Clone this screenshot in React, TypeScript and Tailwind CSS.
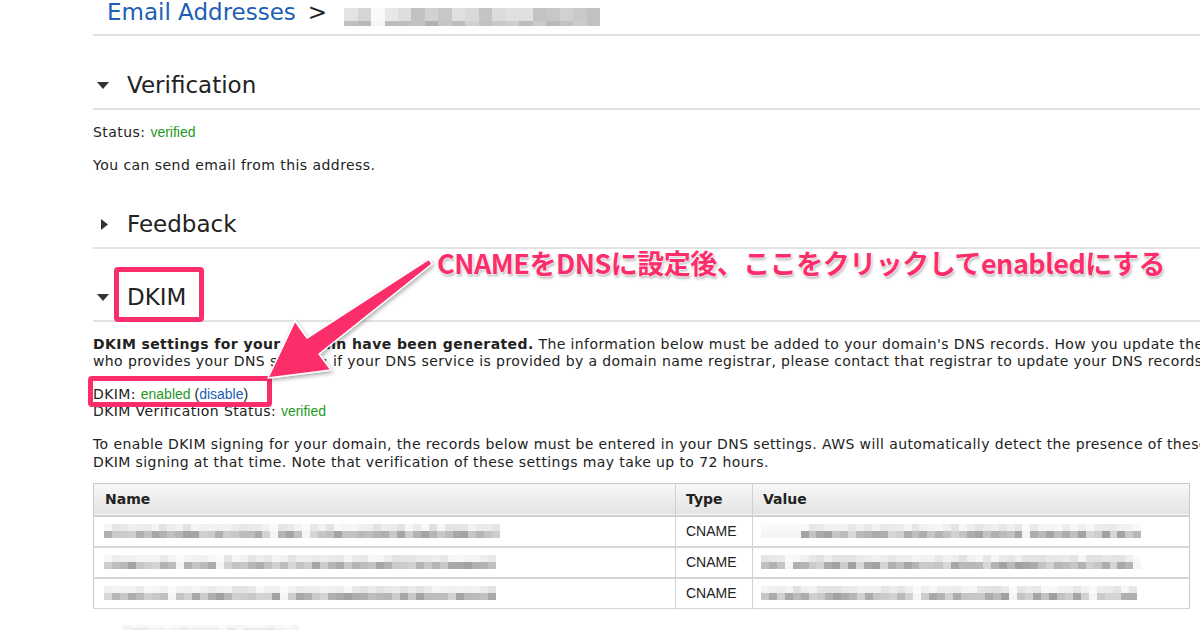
import React from "react";

const PINK = "#fb2d6a";

// deterministic pseudo random so the mosaic is stable
function rng(seed: number) {
  let s = seed;
  return () => {
    s = (s * 9301 + 49297) % 233280;
    return s / 233280;
  };
}

function gray(v: number) {
  const c = Math.round(v);
  return `rgb(${c},${c},${c + 2})`;
}

function Mosaic({
  width,
  seed,
  block = 8,
  topH = 7,
  botH = 7,
  top = [225, 248],
  bot = [160, 215],
}: {
  width: number;
  seed: number;
  block?: number;
  topH?: number;
  botH?: number;
  top?: number[];
  bot?: number[];
}) {
  const r = rng(seed);
  const n = Math.ceil(width / block);
  const cells = Array.from({ length: n }, () => {
    const gap = r() < 0.06;
    return {
      t: gap ? 250 : top[0] + r() * (top[1] - top[0]),
      b: gap ? 245 : bot[0] + r() * (bot[1] - bot[0]),
    };
  });
  return (
    <div className="flex flex-col" style={{ width }}>
      <div className="flex">
        {cells.map((c, i) => (
          <div key={i} style={{ width: block, height: topH, background: gray(c.t) }} />
        ))}
      </div>
      <div className="flex">
        {cells.map((c, i) => (
          <div key={i} style={{ width: block, height: botH, background: gray(c.b) }} />
        ))}
      </div>
    </div>
  );
}

function Caret({ open }: { open: boolean }) {
  return (
    <div className="w-[34px] flex items-center">
      {open ? (
        <svg width="12" height="7" viewBox="0 0 12 7" className="ml-[4px]">
          <path d="M0 0 L12 0 L6 7 Z" fill="#333" />
        </svg>
      ) : (
        <svg width="7" height="11" viewBox="0 0 7 11" className="ml-[8px]">
          <path d="M0 0 L7 5.5 L0 11 Z" fill="#333" />
        </svg>
      )}
    </div>
  );
}

function SectionHead({ title, open, className }: { title: string; open: boolean; className: string }) {
  return (
    <div className={`flex items-center h-[30px] pb-[8px] box-content border-b-2 border-[#e2e2e2] ${className}`}>
      <Caret open={open} />
      <span className="text-[23px] leading-[30px] text-[#222]">{title}</span>
    </div>
  );
}

const rows = [
  { seed: 11, vseed: 71, nameW: 396, valW: 380 },
  { seed: 23, vseed: 83, nameW: 392, valW: 380 },
  { seed: 37, vseed: 97, nameW: 392, valW: 376 },
];

export default function App() {
  return (
    <div className="relative w-[1200px] h-[630px] overflow-hidden bg-white text-[#222] font-['DejaVu_Sans',Verdana,sans-serif]">
      <div className="pl-[93px]">
        {/* Breadcrumb */}
        <div className="flex items-start h-[36px] border-b-2 border-[#e2e2e2]">
          <span className="text-[23px] leading-[24px] text-[#1d5fb6] ml-[14px]">Email Addresses</span>
          <span className="text-[23px] leading-[24px] text-[#222] ml-[12px]">&gt;</span>
          <div className="ml-[17px] mt-[8px]">
            <Mosaic width={256} seed={5} block={14} topH={13} botH={5} top={[190, 232]} bot={[170, 210]} />
          </div>
        </div>

        <SectionHead title="Verification" open className="mt-[34px]" />
        <div className="text-[14px] leading-[18px] tracking-[0.45px] mt-[13px]">
          Status: <span className="font-['Liberation_Sans',Arial,sans-serif] tracking-normal text-[#1f9a1f]">verified</span>
        </div>
        <div className="text-[14px] leading-[18px] tracking-[0.45px] mt-[15px]">You can send email from this address.</div>

        <SectionHead title="Feedback" open={false} className="mt-[35px]" />

        <SectionHead title="DKIM" open className="mt-[33px]" />
        <div className="text-[14px] leading-[17px] tracking-[0.4px] mt-[14px] whitespace-nowrap">
          <div>
            <b>DKIM settings for your domain have been generated.</b> The information below must be added to your
            domain's DNS records. How you update the DNS records depends on
          </div>
          <div>
            who provides your DNS service; if your DNS service is provided by a domain name registrar, please contact
            that registrar to update your DNS records.
          </div>
        </div>

        <div className="text-[14px] leading-[17px] tracking-[0.4px] mt-[16px] whitespace-nowrap">
          <div>
            DKIM:{" "}
            <span className="font-['Liberation_Sans',Arial,sans-serif] tracking-normal">
              <span className="text-[#1f9a1f]">enabled</span> (<span className="text-[#1d5fb6]">disable</span>)
            </span>
          </div>
          <div>
            DKIM Verification Status:{" "}
            <span className="font-['Liberation_Sans',Arial,sans-serif] tracking-normal text-[#1f9a1f]">verified</span>
          </div>
        </div>

        <div className="text-[14px] leading-[18px] tracking-[0.4px] mt-[15px] whitespace-nowrap">
          <div>
            To enable DKIM signing for your domain, the records below must be entered in your DNS settings. AWS will
            automatically detect the presence of these records, and enable
          </div>
          <div>DKIM signing at that time. Note that verification of these settings may take up to 72 hours.</div>
        </div>

        {/* Records table */}
        <table className="mt-[12px] w-[1097px] border-collapse border border-[#c9c9c9] text-[14px]">
          <thead>
            <tr className="h-[32px] bg-gradient-to-b from-[#f8f8f8] to-[#e3e3e3] border-b-2 border-[#cfcfcf]">
              <th className="w-[582px] text-left font-bold pl-[11px] border-r border-[#d0d0d0]">Name</th>
              <th className="w-[77px] text-left font-bold pl-[10px] border-r border-[#d0d0d0]">Type</th>
              <th className="text-left font-bold pl-[10px]">Value</th>
            </tr>
          </thead>
          <tbody>
            {rows.map((r) => (
              <tr key={r.seed} className="h-[31px] border-b-2 border-[#d6d6d6] last:border-b">
                <td className="pl-[10px] border-r border-[#d0d0d0]">
                  <Mosaic width={r.nameW} seed={r.seed} />
                </td>
                <td className="pl-[10px] border-r border-[#d0d0d0] font-['Liberation_Sans',Arial,sans-serif] text-[14px] text-[#222]">
                  CNAME
                </td>
                <td className="pl-[8px]">
                  <Mosaic width={r.valW} seed={r.vseed} />
                </td>
              </tr>
            ))}
          </tbody>
        </table>
        <div className="mt-[16px] ml-[30px] opacity-60">
          <Mosaic width={176} seed={3} topH={3} botH={3} top={[235, 250]} bot={[215, 240]} />
        </div>
      </div>

      {/* Annotation layer */}
      <div className="absolute left-[114px] top-[267px] w-[90px] h-[55px] border-[5px] border-[#fb2d6a] rounded-[4px]" />
      <div className="absolute left-[88px] top-[376px] w-[184px] h-[31px] border-[5px] border-[#fb2d6a] rounded-[4px]" />
      <svg className="absolute inset-0 pointer-events-none" width="1200" height="630">
        <defs>
          <filter id="sh" x="-20%" y="-20%" width="140%" height="140%">
            <feDropShadow dx="1" dy="2" stdDeviation="2" floodColor="#000" floodOpacity="0.35" />
          </filter>
        </defs>
        <polygon
          points="268,378 295,321 307,338 429,259 432,264 319,354 331,370"
          fill={PINK}
          stroke="#fff"
          strokeWidth="1.5"
          strokeLinejoin="round"
          filter="url(#sh)"
        />
      </svg>
      <div className="absolute left-[437px] top-[247px] whitespace-nowrap text-[27px] leading-[32px] font-bold tracking-[-0.5px] text-[#fb2d6a] font-['Noto_Sans_CJK_JP','Noto_Sans',sans-serif] [text-shadow:0_0_2px_#fff,0_0_2px_#fff,0_0_3px_#fff,1px_2px_3px_rgba(0,0,0,0.4)]">
        CNAMEをDNSに設定後、ここをクリックしてenabledにする
      </div>
    </div>
  );
}
